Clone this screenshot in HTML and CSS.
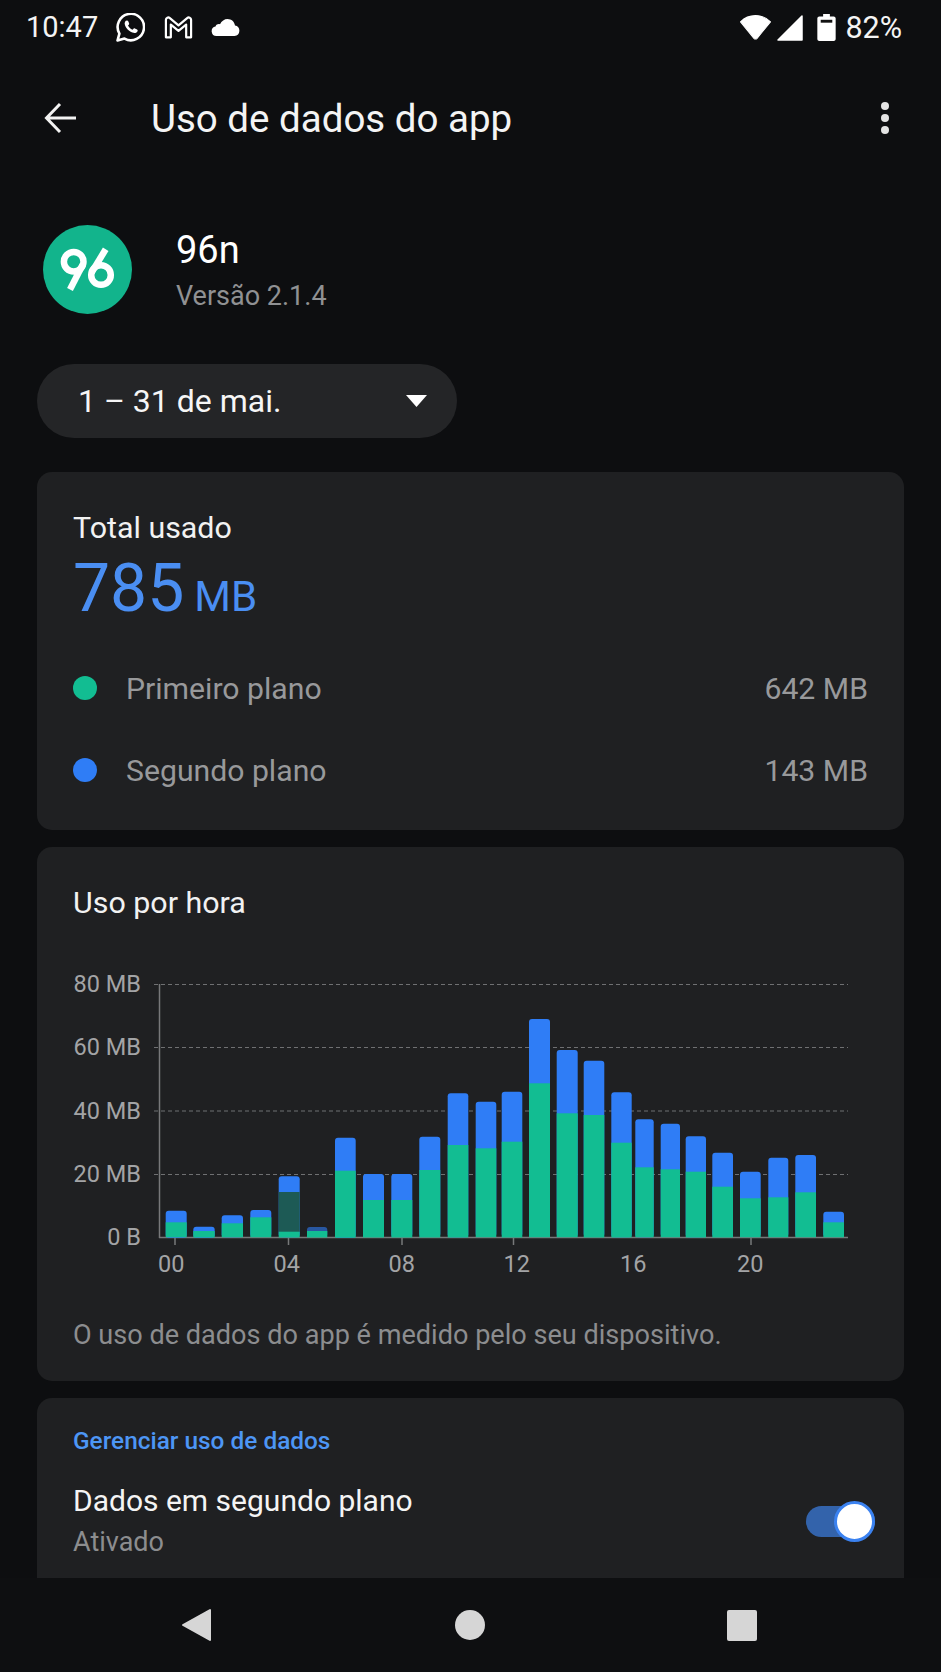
FILE: index.html
```html
<!DOCTYPE html>
<html>
    <head>
        <meta charset="utf-8">
        <title>Uso de dados do app</title>
        <link rel="stylesheet" href="styles.css">
    </head>
    <body>
        <div class="screen">
            <div class="status">
                <span class="clock">10:47</span>
                <svg class="st-wa" viewBox="1.5 1.5 29 29"><path d="M3 29l1.9-6.9A13.2 13.2 0 1 1 10 27.100z" fill="none" stroke="#fff" stroke-width="2.6" stroke-linejoin="round"/><path d="M11.6 9.4c.6-.6 1.6-.6 2 .2l1 2.2c.2.5.1 1-.3 1.4l-.8.9c.9 1.8 2.5 3.3 4.500 4.200l1-1.100c.4-.4.9-.5 1.400-.3l2.200 1c.7.4.8 1.300.3 2-1 1.300-2.500 1.800-4.100 1.400-4.300-1.100-7.800-4.500-8.600-8.700-.2-1.300.3-2.600 1.400-3.600z" fill="#fff"/></svg>
                <svg class="st-gm" viewBox="2 2 26 21"><path d="M3.500 21.500V5.500c0-2 2.200-2.800 3.600-1.600L15 10.500l7.900-6.600c1.400-1.200 3.600-.4 3.600 1.600v16h-4.500V9.800L15 15.600 8 9.800v11.700z" fill="none" stroke="#fff" stroke-width="2" stroke-linejoin="round"/></svg>
                <svg class="st-cl" viewBox="0 0 29 17"><path d="M5.500 17a4.800 4.800 0 0 1-1-9.500C5.300 5.500 7.300 4.700 9 5.300 10.500 2 13.500 0 16.500 0c4 0 7 2.800 7.500 6.500a5.300 5.300 0 0 1-.5 10.500z" fill="#fff"/></svg>
                <span class="grow"></span>
                <svg class="st-wifi" viewBox="1 3 30 24"><path d="M1.500 9.500C9.500 1.500 22.500 1.500 30.500 9.500L17.500 25.500c-.8.9-2.200.9-3 0z" fill="#fff" stroke="#fff" stroke-linejoin="round"/></svg>
                <svg class="st-sig" viewBox="0 0 26 27"><path d="M1 26L25 2v24z" fill="#fff" stroke="#fff" stroke-width="1.500" stroke-linejoin="round"/></svg>
                <svg class="st-bat" viewBox="0 0 19 28"><path d="M6 0h7v2.500h4c1 0 2 .8 2 2V26c0 1.200-1 2-2 2H2c-1 0-2-.8-2-2V4.500c0-1.200 1-2 2-2h4z" fill="#fff"/><rect x="3.500" y="6" width="12" height="3" fill="#111"/></svg>
                <span class="batt">82%</span>
            </div>

            <div class="toolbar">
                <svg class="back" viewBox="0 0 34 32"><path d="M32 16H3M16 2L2.500 16 16 30" fill="none" stroke="#f2f2f2" stroke-width="3"/></svg>
                <h1>Uso de dados do app</h1>
                <div class="dots"><i></i><i></i><i></i></div>
            </div>

            <div class="app">
                <svg class="app-icon" viewBox="0 0 89 89">
                    <circle cx="44.5" cy="44.5" r="44.5" fill="#12b48c"/>
                    <g fill="none" stroke="#fff" stroke-width="6.5">
                        <circle cx="30.7" cy="36.7" r="9.8"/>
                        <path d="M39.8 39.500L27 64.500"/>
                        <circle cx="58" cy="50" r="9.8"/>
                        <path d="M48.600 47.500L62.700 24.300"/>
                    </g>
                </svg>
                <div class="app-text">
                    <div class="app-name">96n</div>
                    <div class="app-ver">Versão 2.1.4</div>
                </div>
            </div>

            <div class="pill">
                <span>1 – 31 de mai.</span>
                <svg class="caret" viewBox="0 0 21 12"><path d="M0 0h21L10.5 12z" fill="#fff"/></svg>
            </div>

            <section class="card total">
                <div class="label">Total usado</div>
                <div class="amount">785<small>MB</small></div>
                <div class="row"><i class="dot green"></i><span>Primeiro plano</span><b>642 MB</b></div>
                <div class="row"><i class="dot blue"></i><span>Segundo plano</span><b>143 MB</b></div>
            </section>

            <section class="card hourly">
                <div class="label">Uso por hora</div>
                <!-- viewBox is in screen pixels so the bars read straight off the screenshot -->
                <svg class="chart" viewBox="37 940 867 350">
                    <g class="grid">
                        <line x1="154" x2="848" y1="984.5" y2="984.5"/>
                        <line x1="154" x2="848" y1="1047.5" y2="1047.5"/>
                        <line x1="154" x2="848" y1="1111" y2="1111"/>
                        <line x1="154" x2="848" y1="1174.5" y2="1174.5"/>
                    </g>
                    <g class="axis">
                        <line x1="159.5" x2="159.5" y1="984" y2="1238"/>
                        <line x1="159" x2="848" y1="1237.5" y2="1237.5"/>
                        <line x1="175" x2="175" y1="1238" y2="1245"/>
                        <line x1="288.5" x2="288.5" y1="1238" y2="1245"/>
                        <line x1="402" x2="402" y1="1238" y2="1245"/>
                        <line x1="513.5" x2="513.5" y1="1238" y2="1245"/>
                        <line x1="751" x2="751" y1="1238" y2="1245"/>
                    </g>
                    <g class="ylabels">
                        <text x="141" y="992">80 MB</text>
                        <text x="141" y="1055">60 MB</text>
                        <text x="141" y="1119">40 MB</text>
                        <text x="141" y="1182">20 MB</text>
                        <text x="141" y="1245">0 B</text>
                    </g>
                    <g class="xlabels">
                        <text x="158" y="1272">00</text>
                        <text x="273.5" y="1272">04</text>
                        <text x="388.5" y="1272">08</text>
                        <text x="503.5" y="1272">12</text>
                        <text x="620" y="1272">16</text>
                        <text x="737" y="1272">20</text>
                    </g>
                    <g class="bars">
                        <g class="blue-bars">
                            <rect x="165.7" y="1210.7" width="21" height="27" rx="3"/>
                            <rect x="193.3" y="1226.7" width="21.4" height="11" rx="3"/>
                            <rect x="221.7" y="1215.3" width="21.3" height="22" rx="3"/>
                            <rect x="250.3" y="1210" width="21" height="27" rx="3"/>
                            <rect x="278.7" y="1176.3" width="21" height="61" rx="3"/>
                            <rect x="307" y="1227" width="20.3" height="10" rx="3" opacity=".6"/>
                            <rect x="335" y="1137.7" width="20.7" height="100" rx="3"/>
                            <rect x="363" y="1174" width="21" height="63" rx="3"/>
                            <rect x="391.3" y="1174" width="21" height="63" rx="3"/>
                            <rect x="419.3" y="1136.7" width="21" height="100" rx="3"/>
                            <rect x="447.7" y="1093.3" width="20.6" height="144" rx="3"/>
                            <rect x="475.7" y="1101.7" width="20.6" height="135" rx="3"/>
                            <rect x="501.7" y="1091.7" width="20.6" height="145" rx="3"/>
                            <rect x="529" y="1019" width="21" height="218" rx="3"/>
                            <rect x="556.7" y="1050" width="21" height="187" rx="3"/>
                            <rect x="583.7" y="1060.7" width="20.6" height="176" rx="3"/>
                            <rect x="611.3" y="1092.3" width="20.4" height="145" rx="3"/>
                            <rect x="635.3" y="1119.3" width="18.4" height="118" rx="3"/>
                            <rect x="660.7" y="1123.7" width="19.3" height="113" rx="3"/>
                            <rect x="685.7" y="1136.3" width="20.3" height="101" rx="3"/>
                            <rect x="712.3" y="1152.7" width="20.7" height="84" rx="3"/>
                            <rect x="740" y="1171.7" width="20.7" height="65" rx="3"/>
                            <rect x="768.3" y="1157.7" width="20" height="79" rx="3"/>
                            <rect x="795.3" y="1155" width="20.7" height="82" rx="3"/>
                            <rect x="823.3" y="1211.7" width="20.7" height="25" rx="3"/>
                        </g>
                        <rect class="smudge" x="278.7" y="1192" width="21" height="40"/>
                        <g class="green-bars">
                            <rect x="165.7" y="1222.3" width="21" height="15"/>
                            <rect x="193.3" y="1231" width="21.4" height="6.5"/>
                            <rect x="221.7" y="1223.3" width="21.3" height="14"/>
                            <rect x="250.3" y="1217.3" width="21" height="20"/>
                            <rect x="278.7" y="1231.7" width="21" height="5.8"/>
                            <rect x="307" y="1231" width="20.3" height="6.5"/>
                            <rect x="335" y="1170.7" width="20.7" height="67"/>
                            <rect x="363" y="1200" width="21" height="37.5"/>
                            <rect x="391.3" y="1200" width="21" height="37.5"/>
                            <rect x="419.3" y="1170" width="21" height="67.5"/>
                            <rect x="447.7" y="1145" width="20.6" height="92.5"/>
                            <rect x="475.7" y="1148.3" width="20.6" height="89"/>
                            <rect x="501.7" y="1141.7" width="20.6" height="95.8"/>
                            <rect x="529" y="1083.3" width="21" height="154"/>
                            <rect x="556.7" y="1113.3" width="21" height="124"/>
                            <rect x="583.7" y="1115" width="20.6" height="122.5"/>
                            <rect x="611.3" y="1142.7" width="20.4" height="94.8"/>
                            <rect x="635.3" y="1167.3" width="18.4" height="70"/>
                            <rect x="660.7" y="1169.3" width="19.3" height="68"/>
                            <rect x="685.7" y="1171.7" width="20.3" height="65.8"/>
                            <rect x="712.3" y="1186.7" width="20.7" height="50.8"/>
                            <rect x="740" y="1198.3" width="20.7" height="39"/>
                            <rect x="768.3" y="1197.3" width="20" height="40"/>
                            <rect x="795.3" y="1192.3" width="20.7" height="45"/>
                            <rect x="823.3" y="1222.3" width="20.7" height="15"/>
                        </g>
                    </g>
                </svg>
                <p class="note">O uso de dados do app é medido pelo seu dispositivo.</p>
            </section>

            <section class="card manage">
                <div class="manage-title">Gerenciar uso de dados</div>
                <div class="setting">
                    <div>
                        <div class="setting-name">Dados em segundo plano</div>
                        <div class="setting-state">Ativado</div>
                    </div>
                    <div class="switch"><i></i></div>
                </div>
            </section>

            <div class="nav">
                <svg class="nav-back" viewBox="0 0 30 34"><path d="M29 2v30L2 17z" fill="#d6d6d6" stroke="#d6d6d6" stroke-width="2" stroke-linejoin="round"/></svg>
                <i class="nav-home"></i>
                <i class="nav-recent"></i>
            </div>
        </div>
    </body>
</html>
```

FILE: styles.css
```css
*{
    box-sizing: border-box;
}
html, body{
    margin: 0;
    background: #0d0e10;
}
.screen{
    position: relative;
    width: 941px;
    height: 1672px;
    overflow: hidden;
    font-family: Roboto, "Liberation Sans", sans-serif;
    color: #fff;
}

/* status bar */
.status{
    display: flex;
    align-items: center;
    height: 54px;
    padding: 0 39px 0 26px;
}
.clock, .batt{
    font-size: 29px;
    color: #f4f4f4;
}
.grow{
    flex: 1;
}
.st-wa{
    width: 29px;
    height: 29px;
    margin-left: 18px;
}
.st-gm{
    width: 29px;
    height: 23px;
    margin-left: 19px;
}
.st-cl{
    width: 29px;
    height: 17px;
    margin-left: 18px;
}
.st-wifi{
    width: 31px;
    height: 25px;
}
.st-sig{
    width: 26px;
    height: 27px;
    margin-left: 6px;
}
.st-bat{
    width: 19px;
    height: 27px;
    margin-left: 14px;
}
.batt{
    margin-left: 9px;
    font-size: 30.5px;
}

/* toolbar */
.toolbar{
    display: flex;
    align-items: center;
    height: 64px;
    margin-top: 32px;
    padding: 0 44px;
}
.back{
    width: 34px;
    height: 32px;
}
h1{
    flex: 1;
    margin: 0 0 0 73px;
    font-size: 38.5px;
    font-weight: 400;
    color: #f4f4f4;
}
.dots{
    display: flex;
    flex-direction: column;
    gap: 4px;
    margin-right: 8px;
}
.dots i{
    width: 8px;
    height: 8px;
    border-radius: 50%;
    background: #e4e4e4;
}

/* app header */
.app{
    display: flex;
    align-items: center;
    gap: 44px;
    margin-top: 75px;
    padding-left: 43px;
}
.app-icon{
    width: 89px;
    height: 89px;
}
.app-text{
    padding-top: 2px;
}
.app-name{
    font-size: 38px;
    line-height: 46px;
}
.app-ver{
    margin-top: 5px;
    font-size: 27px;
    line-height: 36px;
    color: #909193;
}

.pill{
    display: flex;
    align-items: center;
    justify-content: space-between;
    width: 420px;
    height: 74px;
    margin: 50px 0 0 37px;
    padding: 0 30px 0 41px;
    border-radius: 37px;
    background: #242527;
    font-size: 32px;
    color: #f6f6f6;
}
.caret{
    width: 21px;
    height: 12px;
}

/* cards */
.card{
    margin: 17px 37px 0;
    padding: 0 36px;
    border-radius: 15px;
    background: #1f2022;
}
.label{
    font-size: 30.4px;
    line-height: 36px;
    color: #f2f2f2;
}
.total{
    height: 358px;
    margin-top: 34px;
    padding-top: 38px;
}
.amount{
    margin-top: 4px;
    font-size: 66px;
    line-height: 78px;
    color: #4a8ef2;
}
.amount small{
    margin-left: 10px;
    font-size: 42px;
}
.row{
    display: flex;
    align-items: center;
    height: 82px;
    font-size: 30.2px;
    color: #98999b;
}
.amount + .row{
    margin-top: 11px;
}
.row span{
    flex: 1;
    margin-left: 29px;
}
.row b{
    font-weight: 400;
}
.dot{
    width: 24px;
    height: 24px;
    border-radius: 50%;
}
.dot.green{
    background: #12bd92;
}
.dot.blue{
    background: #2f7df6;
}
.hourly{
    height: 534px;
    padding-top: 38px;
}
.chart{
    display: block;
    width: 867px;
    height: 350px;
    margin: 19px -36px 0;
}
.grid line{
    stroke: #6f7072;
    stroke-width: 1;
    stroke-dasharray: 4 3;
}
.axis line{
    stroke: #77787a;
    stroke-width: 1.5;
}
.chart text{
    font-size: 23.5px;
    fill: #a3a4a6;
}
.ylabels text{
    text-anchor: end;
}
.bars{
    filter: blur(.7px);
}
.blue-bars rect{
    fill: #2f7df6;
}
.green-bars rect{
    fill: #12bd92;
}
.smudge{
    fill: #1d5a55;
}
.note{
    margin: 29px 0 0;
    font-size: 27.1px;
    line-height: 32px;
    color: #8c8d8f;
}
.manage{
    height: 200px;
    padding-top: 27px;
    border-radius: 15px 15px 0 0;
}
.manage-title{
    font-size: 24.4px;
    font-weight: 500;
    line-height: 32px;
    color: #4d96f5;
}
.setting{
    display: flex;
    align-items: center;
    justify-content: space-between;
    margin-top: 25px;
}
.setting-name{
    font-size: 30px;
    line-height: 38px;
    color: #f4f4f4;
}
.setting-state{
    margin-top: 6px;
    font-size: 27px;
    line-height: 32px;
    color: #8c8d8f;
}
.switch{
    position: relative;
    width: 69px;
    height: 31px;
    margin: 2px -7px 0 0;
    border-radius: 16px;
    background: #3363ab;
}
.switch i{
    position: absolute;
    right: 0;
    top: -5px;
    width: 41px;
    height: 41px;
    border: 3px solid #3b82f0;
    border-radius: 50%;
    background: #fff;
}

/* nav bar sits over the clipped card */
.nav{
    position: absolute;
    left: 0;
    right: 0;
    bottom: 0;
    height: 94px;
    background: #0e0f11;
}
.nav-back{
    position: absolute;
    left: 181px;
    top: 30px;
    width: 30px;
    height: 34px;
}
.nav-home{
    position: absolute;
    left: 455px;
    top: 32px;
    width: 30px;
    height: 30px;
    border-radius: 50%;
    background: #d6d6d6;
}
.nav-recent{
    position: absolute;
    left: 727px;
    top: 32px;
    width: 30px;
    height: 31px;
    border-radius: 2px;
    background: #d6d6d6;
}
```
